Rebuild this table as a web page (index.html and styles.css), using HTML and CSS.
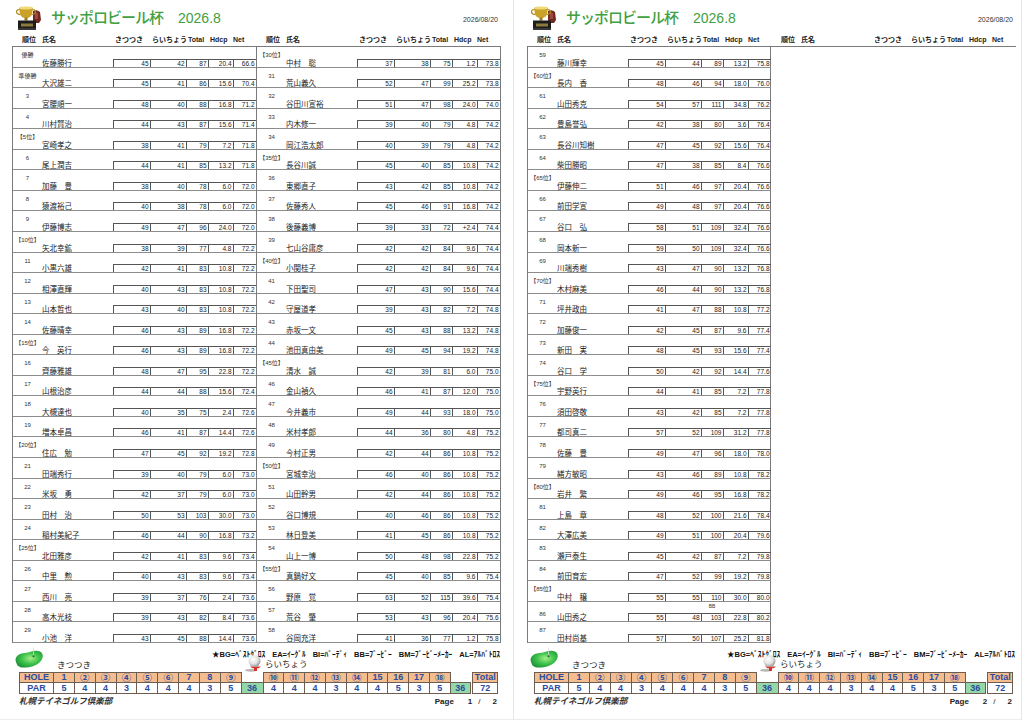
FILE: index.html
```html
<!DOCTYPE html>
<html lang="ja">
<head>
<meta charset="utf-8">
<title>サッポロビール杯 2026.8</title>
<link rel="stylesheet" href="styles.css">
</head>
<body>
<div class="sheet">

<!-- ================= PAGE 1 ================= -->
<section class="page page1">
  <header class="top">
    <svg class="logo" viewBox="0 0 28 26" aria-hidden="true">
      <path d="M19 6 Q23 4 26 7 L27 15 L25 18 L19 18 Z" fill="#6e2a20"/>
      <path d="M21 7 L24 8 L24 14 L21 14 Z" fill="#a0483a"/>
      <path d="M5 3 H19 L18 9 Q17 13 12 13 Q7 13 6 9 Z" fill="#c9a227"/>
      <ellipse cx="12" cy="3" rx="7" ry="1.6" fill="#f0d978"/>
      <path d="M5.5 4.5 Q2 4.5 2.6 7.5 Q3.4 9.5 6.5 9.5" fill="none" stroke="#b28a1c" stroke-width="1.2"/>
      <path d="M18.5 4.5 Q22 4.5 21.4 7.5 Q20.6 9.5 17.5 9.5" fill="none" stroke="#b28a1c" stroke-width="1.2"/>
      <rect x="10.5" y="12.5" width="3" height="3" fill="#9c7a16"/>
      <path d="M4 15.5 H22 V25 H4 Z" fill="#1c1c1c"/>
      <rect x="7" y="18.5" width="12" height="3" fill="#8c7a3c"/>
      <rect x="4" y="23.5" width="18" height="1" fill="#555"/>
    </svg>
    <h1 class="title"><span class="title-jp">サッポロビール杯</span><span class="title-yr">2026.8</span></h1>
    <span class="date">2026/08/20</span>
  </header>

  <div class="colheads">
    <div class="ch"><span class="ch-rank">順位</span><span class="ch-name">氏名</span><span>きつつき</span><span>らいちょう</span><span>Total</span><span>Hdcp</span><span class="ch-net">Net</span></div>
    <div class="ch"><span class="ch-rank">順位</span><span class="ch-name">氏名</span><span>きつつき</span><span>らいちょう</span><span>Total</span><span>Hdcp</span><span class="ch-net">Net</span></div>
  </div>

  <div class="table">
    <div class="col">
      <div class="row"><span class="rk">優勝</span><span class="nm">佐藤勝行</span><span class="c">45</span><span class="c">42</span><span class="c">87</span><span class="c">20.4</span><span class="c">66.6</span></div>
      <div class="row"><span class="rk">準優勝</span><span class="nm">大沢雄二</span><span class="c">45</span><span class="c">41</span><span class="c">86</span><span class="c">15.6</span><span class="c">70.4</span></div>
      <div class="row"><span class="rk">3</span><span class="nm">宮腰順一</span><span class="c">48</span><span class="c">40</span><span class="c">88</span><span class="c">16.8</span><span class="c">71.2</span></div>
      <div class="row"><span class="rk">4</span><span class="nm">川村賢治</span><span class="c">44</span><span class="c">43</span><span class="c">87</span><span class="c">15.6</span><span class="c">71.4</span></div>
      <div class="row"><span class="rk">【5位】</span><span class="nm">宮崎孝之</span><span class="c">38</span><span class="c">41</span><span class="c">79</span><span class="c">7.2</span><span class="c">71.8</span></div>
      <div class="row"><span class="rk">6</span><span class="nm">尾上潤吉</span><span class="c">44</span><span class="c">41</span><span class="c">85</span><span class="c">13.2</span><span class="c">71.8</span></div>
      <div class="row"><span class="rk">7</span><span class="nm">加藤　豊</span><span class="c">38</span><span class="c">40</span><span class="c">78</span><span class="c">6.0</span><span class="c">72.0</span></div>
      <div class="row"><span class="rk">8</span><span class="nm">猿渡裕己</span><span class="c">40</span><span class="c">38</span><span class="c">78</span><span class="c">6.0</span><span class="c">72.0</span></div>
      <div class="row"><span class="rk">9</span><span class="nm">伊藤博志</span><span class="c">49</span><span class="c">47</span><span class="c">96</span><span class="c">24.0</span><span class="c">72.0</span></div>
      <div class="row"><span class="rk">【10位】</span><span class="nm">矢北幸鉱</span><span class="c">38</span><span class="c">39</span><span class="c">77</span><span class="c">4.8</span><span class="c">72.2</span></div>
      <div class="row"><span class="rk">11</span><span class="nm">小黒六雄</span><span class="c">42</span><span class="c">41</span><span class="c">83</span><span class="c">10.8</span><span class="c">72.2</span></div>
      <div class="row"><span class="rk">12</span><span class="nm">相澤直輝</span><span class="c">40</span><span class="c">43</span><span class="c">83</span><span class="c">10.8</span><span class="c">72.2</span></div>
      <div class="row"><span class="rk">13</span><span class="nm">山本哲也</span><span class="c">43</span><span class="c">40</span><span class="c">83</span><span class="c">10.8</span><span class="c">72.2</span></div>
      <div class="row"><span class="rk">14</span><span class="nm">佐藤晴幸</span><span class="c">46</span><span class="c">43</span><span class="c">89</span><span class="c">16.8</span><span class="c">72.2</span></div>
      <div class="row"><span class="rk">【15位】</span><span class="nm">今　英行</span><span class="c">46</span><span class="c">43</span><span class="c">89</span><span class="c">16.8</span><span class="c">72.2</span></div>
      <div class="row"><span class="rk">16</span><span class="nm">齊藤雅雄</span><span class="c">48</span><span class="c">47</span><span class="c">95</span><span class="c">22.8</span><span class="c">72.2</span></div>
      <div class="row"><span class="rk">17</span><span class="nm">山根治彦</span><span class="c">44</span><span class="c">44</span><span class="c">88</span><span class="c">15.6</span><span class="c">72.4</span></div>
      <div class="row"><span class="rk">18</span><span class="nm">大槻達也</span><span class="c">40</span><span class="c">35</span><span class="c">75</span><span class="c">2.4</span><span class="c">72.6</span></div>
      <div class="row"><span class="rk">19</span><span class="nm">増本卓昌</span><span class="c">46</span><span class="c">41</span><span class="c">87</span><span class="c">14.4</span><span class="c">72.6</span></div>
      <div class="row"><span class="rk">【20位】</span><span class="nm">住広　勉</span><span class="c">47</span><span class="c">45</span><span class="c">92</span><span class="c">19.2</span><span class="c">72.8</span></div>
      <div class="row"><span class="rk">21</span><span class="nm">田端秀行</span><span class="c">39</span><span class="c">40</span><span class="c">79</span><span class="c">6.0</span><span class="c">73.0</span></div>
      <div class="row"><span class="rk">22</span><span class="nm">米坂　勇</span><span class="c">42</span><span class="c">37</span><span class="c">79</span><span class="c">6.0</span><span class="c">73.0</span></div>
      <div class="row"><span class="rk">23</span><span class="nm">田村　治</span><span class="c">50</span><span class="c">53</span><span class="c">103</span><span class="c">30.0</span><span class="c">73.0</span></div>
      <div class="row"><span class="rk">24</span><span class="nm">稲村美紀子</span><span class="c">46</span><span class="c">44</span><span class="c">90</span><span class="c">16.8</span><span class="c">73.2</span></div>
      <div class="row"><span class="rk">【25位】</span><span class="nm">北田雅彦</span><span class="c">42</span><span class="c">41</span><span class="c">83</span><span class="c">9.6</span><span class="c">73.4</span></div>
      <div class="row"><span class="rk">26</span><span class="nm">中里　勲</span><span class="c">40</span><span class="c">43</span><span class="c">83</span><span class="c">9.6</span><span class="c">73.4</span></div>
      <div class="row"><span class="rk">27</span><span class="nm">西川　亮</span><span class="c">39</span><span class="c">37</span><span class="c">76</span><span class="c">2.4</span><span class="c">73.6</span></div>
      <div class="row"><span class="rk">28</span><span class="nm">高木光枝</span><span class="c">39</span><span class="c">43</span><span class="c">82</span><span class="c">8.4</span><span class="c">73.6</span></div>
      <div class="row"><span class="rk">29</span><span class="nm">小池　洋</span><span class="c">43</span><span class="c">45</span><span class="c">88</span><span class="c">14.4</span><span class="c">73.6</span></div>
    </div>
    <div class="col col-last">
      <div class="row"><span class="rk">【30位】</span><span class="nm">中村　聡</span><span class="c">37</span><span class="c">38</span><span class="c">75</span><span class="c">1.2</span><span class="c">73.8</span></div>
      <div class="row"><span class="rk">31</span><span class="nm">荒山義久</span><span class="c">52</span><span class="c">47</span><span class="c">99</span><span class="c">25.2</span><span class="c">73.8</span></div>
      <div class="row"><span class="rk">32</span><span class="nm">谷田川宣裕</span><span class="c">51</span><span class="c">47</span><span class="c">98</span><span class="c">24.0</span><span class="c">74.0</span></div>
      <div class="row"><span class="rk">33</span><span class="nm">内木修一</span><span class="c">39</span><span class="c">40</span><span class="c">79</span><span class="c">4.8</span><span class="c">74.2</span></div>
      <div class="row"><span class="rk">34</span><span class="nm">岡江浩太郎</span><span class="c">40</span><span class="c">39</span><span class="c">79</span><span class="c">4.8</span><span class="c">74.2</span></div>
      <div class="row"><span class="rk">【35位】</span><span class="nm">長谷川誠</span><span class="c">45</span><span class="c">40</span><span class="c">85</span><span class="c">10.8</span><span class="c">74.2</span></div>
      <div class="row"><span class="rk">36</span><span class="nm">東郷直子</span><span class="c">43</span><span class="c">42</span><span class="c">85</span><span class="c">10.8</span><span class="c">74.2</span></div>
      <div class="row"><span class="rk">37</span><span class="nm">佐藤秀人</span><span class="c">45</span><span class="c">46</span><span class="c">91</span><span class="c">16.8</span><span class="c">74.2</span></div>
      <div class="row"><span class="rk">38</span><span class="nm">後藤義博</span><span class="c">39</span><span class="c">33</span><span class="c">72</span><span class="c">+2.4</span><span class="c">74.4</span></div>
      <div class="row"><span class="rk">39</span><span class="nm">七山谷庸彦</span><span class="c">42</span><span class="c">42</span><span class="c">84</span><span class="c">9.6</span><span class="c">74.4</span></div>
      <div class="row"><span class="rk">【40位】</span><span class="nm">小関桂子</span><span class="c">42</span><span class="c">42</span><span class="c">84</span><span class="c">9.6</span><span class="c">74.4</span></div>
      <div class="row"><span class="rk">41</span><span class="nm">下田聖司</span><span class="c">47</span><span class="c">43</span><span class="c">90</span><span class="c">15.6</span><span class="c">74.4</span></div>
      <div class="row"><span class="rk">42</span><span class="nm">守屋道孝</span><span class="c">39</span><span class="c">43</span><span class="c">82</span><span class="c">7.2</span><span class="c">74.8</span></div>
      <div class="row"><span class="rk">43</span><span class="nm">赤坂一文</span><span class="c">45</span><span class="c">43</span><span class="c">88</span><span class="c">13.2</span><span class="c">74.8</span></div>
      <div class="row"><span class="rk">44</span><span class="nm">池田真由美</span><span class="c">49</span><span class="c">45</span><span class="c">94</span><span class="c">19.2</span><span class="c">74.8</span></div>
      <div class="row"><span class="rk">【45位】</span><span class="nm">清水　誠</span><span class="c">42</span><span class="c">39</span><span class="c">81</span><span class="c">6.0</span><span class="c">75.0</span></div>
      <div class="row"><span class="rk">46</span><span class="nm">金山禎久</span><span class="c">46</span><span class="c">41</span><span class="c">87</span><span class="c">12.0</span><span class="c">75.0</span></div>
      <div class="row"><span class="rk">47</span><span class="nm">今井義市</span><span class="c">49</span><span class="c">44</span><span class="c">93</span><span class="c">18.0</span><span class="c">75.0</span></div>
      <div class="row"><span class="rk">48</span><span class="nm">米村孝郎</span><span class="c">44</span><span class="c">36</span><span class="c">80</span><span class="c">4.8</span><span class="c">75.2</span></div>
      <div class="row"><span class="rk">49</span><span class="nm">今村正男</span><span class="c">42</span><span class="c">44</span><span class="c">86</span><span class="c">10.8</span><span class="c">75.2</span></div>
      <div class="row"><span class="rk">【50位】</span><span class="nm">宮城幸治</span><span class="c">46</span><span class="c">40</span><span class="c">86</span><span class="c">10.8</span><span class="c">75.2</span></div>
      <div class="row"><span class="rk">51</span><span class="nm">山田幹男</span><span class="c">42</span><span class="c">44</span><span class="c">86</span><span class="c">10.8</span><span class="c">75.2</span></div>
      <div class="row"><span class="rk">52</span><span class="nm">谷口博規</span><span class="c">40</span><span class="c">46</span><span class="c">86</span><span class="c">10.8</span><span class="c">75.2</span></div>
      <div class="row"><span class="rk">53</span><span class="nm">林日登美</span><span class="c">41</span><span class="c">45</span><span class="c">86</span><span class="c">10.8</span><span class="c">75.2</span></div>
      <div class="row"><span class="rk">54</span><span class="nm">山上一博</span><span class="c">50</span><span class="c">48</span><span class="c">98</span><span class="c">22.8</span><span class="c">75.2</span></div>
      <div class="row"><span class="rk">【55位】</span><span class="nm">真鍋好文</span><span class="c">45</span><span class="c">40</span><span class="c">85</span><span class="c">9.6</span><span class="c">75.4</span></div>
      <div class="row"><span class="rk">56</span><span class="nm">野原　覚</span><span class="c">63</span><span class="c">52</span><span class="c">115</span><span class="c">39.6</span><span class="c">75.4</span></div>
      <div class="row"><span class="rk">57</span><span class="nm">荒谷　肇</span><span class="c">53</span><span class="c">43</span><span class="c">96</span><span class="c">20.4</span><span class="c">75.6</span></div>
      <div class="row"><span class="rk">58</span><span class="nm">谷岡充洋</span><span class="c">41</span><span class="c">36</span><span class="c">77</span><span class="c">1.2</span><span class="c">75.8</span></div>
    </div>
  </div>

  <footer class="foot">
    <div class="legend">
      <svg class="course" viewBox="0 0 30 22" aria-hidden="true">
        <defs>
          <radialGradient id="grn1" cx="55%" cy="45%" r="60%">
            <stop offset="0" stop-color="#a6ec86"/>
            <stop offset="0.55" stop-color="#3dc24c"/>
            <stop offset="1" stop-color="#1e9436"/>
          </radialGradient>
        </defs>
        <path d="M2 15 C0 10 5 6 11 6 C16 6 19 3 24 4 C30 5 30 11 26 15 C22 19 15 21 8 20.5 C4 20 3 18 2 15 Z" fill="url(#grn1)"/>
        <line x1="19.5" y1="0.5" x2="19.5" y2="9" stroke="#d8d8d8" stroke-width="0.8"/>
        <circle cx="19.5" cy="9.2" r="1" fill="#176d29"/>
      </svg>
      <p class="legend-text"><span>★BG=ﾍﾞｽﾄｸﾞﾛｽ</span><span>EA=ｲｰｸﾞﾙ</span><span>BI=ﾊﾞｰﾃﾞｨ</span><span>BB=ﾌﾞｰﾋﾞｰ</span><span>BM=ﾌﾞｰﾋﾞｰﾒｰｶｰ</span><span>AL=ｱﾙﾊﾞﾄﾛｽ</span></p>
      <span class="course-name">きつつき</span>
      <svg class="ball" viewBox="0 0 18 18" aria-hidden="true">
        <defs>
          <radialGradient id="bl1" cx="40%" cy="35%" r="65%">
            <stop offset="0" stop-color="#ffffff"/>
            <stop offset="0.6" stop-color="#e2e2e2"/>
            <stop offset="1" stop-color="#9a9a9a"/>
          </radialGradient>
        </defs>
        <ellipse cx="6" cy="16.3" rx="6" ry="1.4" fill="#7a7a7a" opacity="0.55"/>
        <path d="M5 12.5 H16 L13.5 14.2 H12 V17 H9 V14.2 H7.5 Z" fill="#d7312c"/>
        <circle cx="9.5" cy="7" r="6" fill="url(#bl1)"/>
      </svg>
      <span class="course-name2">らいちょう</span>
    </div>

    <table class="holes">
      <colgroup><col class="w-lab"><col class="w-h" span="9"><col class="w-sub"><col class="w-h2" span="9"><col class="w-sub2"><col class="w-gap"><col class="w-tot"></colgroup>
      <tr class="hole"><th>HOLE</th><td>1</td><td class="cir">②</td><td class="cir">③</td><td class="cir">④</td><td class="cir">⑤</td><td class="cir">⑥</td><td>7</td><td>8</td><td class="cir">⑨</td><td class="blank"></td><td class="cir">⑩</td><td class="cir">⑪</td><td class="cir">⑫</td><td class="cir">⑬</td><td class="cir">⑭</td><td>15</td><td>16</td><td>17</td><td class="cir">⑱</td><td class="blank"></td><td class="blank"></td><td class="tot">Total</td></tr>
      <tr class="par"><th>PAR</th><td>5</td><td>4</td><td>4</td><td>3</td><td>4</td><td>4</td><td>4</td><td>3</td><td>5</td><td class="sub">36</td><td>4</td><td>4</td><td>4</td><td>3</td><td>4</td><td>4</td><td>5</td><td>3</td><td>5</td><td class="sub">36</td><td class="blank"></td><td>72</td></tr>
    </table>

    <div class="bottom">
      <span class="club">札幌テイネゴルフ倶楽部</span>
      <span class="pg">Page</span><span class="pn">1</span><span class="sl">/</span><span class="pn2">2</span>
    </div>
  </footer>
</section>

<!-- ================= PAGE 2 ================= -->
<section class="page page2">
  <header class="top">
    <svg class="logo" viewBox="0 0 28 26" aria-hidden="true">
      <path d="M19 6 Q23 4 26 7 L27 15 L25 18 L19 18 Z" fill="#6e2a20"/>
      <path d="M21 7 L24 8 L24 14 L21 14 Z" fill="#a0483a"/>
      <path d="M5 3 H19 L18 9 Q17 13 12 13 Q7 13 6 9 Z" fill="#c9a227"/>
      <ellipse cx="12" cy="3" rx="7" ry="1.6" fill="#f0d978"/>
      <path d="M5.5 4.5 Q2 4.5 2.6 7.5 Q3.4 9.5 6.5 9.5" fill="none" stroke="#b28a1c" stroke-width="1.2"/>
      <path d="M18.5 4.5 Q22 4.5 21.4 7.5 Q20.6 9.5 17.5 9.5" fill="none" stroke="#b28a1c" stroke-width="1.2"/>
      <rect x="10.5" y="12.5" width="3" height="3" fill="#9c7a16"/>
      <path d="M4 15.5 H22 V25 H4 Z" fill="#1c1c1c"/>
      <rect x="7" y="18.5" width="12" height="3" fill="#8c7a3c"/>
      <rect x="4" y="23.5" width="18" height="1" fill="#555"/>
    </svg>
    <h1 class="title"><span class="title-jp">サッポロビール杯</span><span class="title-yr">2026.8</span></h1>
    <span class="date">2026/08/20</span>
  </header>

  <div class="colheads">
    <div class="ch"><span class="ch-rank">順位</span><span class="ch-name">氏名</span><span>きつつき</span><span>らいちょう</span><span>Total</span><span>Hdcp</span><span class="ch-net">Net</span></div>
    <div class="ch"><span class="ch-rank">順位</span><span class="ch-name">氏名</span><span>きつつき</span><span>らいちょう</span><span>Total</span><span>Hdcp</span><span class="ch-net">Net</span></div>
  </div>

  <div class="table">
    <div class="col col-last">
      <div class="row"><span class="rk">59</span><span class="nm">藤川輝幸</span><span class="c">45</span><span class="c">44</span><span class="c">89</span><span class="c">13.2</span><span class="c">75.8</span></div>
      <div class="row"><span class="rk">【60位】</span><span class="nm">長内　香</span><span class="c">48</span><span class="c">46</span><span class="c">94</span><span class="c">18.0</span><span class="c">76.0</span></div>
      <div class="row"><span class="rk">61</span><span class="nm">山田秀克</span><span class="c">54</span><span class="c">57</span><span class="c">111</span><span class="c">34.8</span><span class="c">76.2</span></div>
      <div class="row"><span class="rk">62</span><span class="nm">豊島誉弘</span><span class="c">42</span><span class="c">38</span><span class="c">80</span><span class="c">3.6</span><span class="c">76.4</span></div>
      <div class="row"><span class="rk">63</span><span class="nm">長谷川知樹</span><span class="c">47</span><span class="c">45</span><span class="c">92</span><span class="c">15.6</span><span class="c">76.4</span></div>
      <div class="row"><span class="rk">64</span><span class="nm">柴田勝昭</span><span class="c">47</span><span class="c">38</span><span class="c">85</span><span class="c">8.4</span><span class="c">76.6</span></div>
      <div class="row"><span class="rk">【65位】</span><span class="nm">伊藤伸二</span><span class="c">51</span><span class="c">46</span><span class="c">97</span><span class="c">20.4</span><span class="c">76.6</span></div>
      <div class="row"><span class="rk">66</span><span class="nm">前田学宣</span><span class="c">49</span><span class="c">48</span><span class="c">97</span><span class="c">20.4</span><span class="c">76.6</span></div>
      <div class="row"><span class="rk">67</span><span class="nm">谷口　弘</span><span class="c">58</span><span class="c">51</span><span class="c">109</span><span class="c">32.4</span><span class="c">76.6</span></div>
      <div class="row"><span class="rk">68</span><span class="nm">岡本新一</span><span class="c">59</span><span class="c">50</span><span class="c">109</span><span class="c">32.4</span><span class="c">76.6</span></div>
      <div class="row"><span class="rk">69</span><span class="nm">川端秀樹</span><span class="c">43</span><span class="c">47</span><span class="c">90</span><span class="c">13.2</span><span class="c">76.8</span></div>
      <div class="row"><span class="rk">【70位】</span><span class="nm">木村麻美</span><span class="c">46</span><span class="c">44</span><span class="c">90</span><span class="c">13.2</span><span class="c">76.8</span></div>
      <div class="row"><span class="rk">71</span><span class="nm">坪井政由</span><span class="c">41</span><span class="c">47</span><span class="c">88</span><span class="c">10.8</span><span class="c">77.2</span></div>
      <div class="row"><span class="rk">72</span><span class="nm">加藤俊一</span><span class="c">42</span><span class="c">45</span><span class="c">87</span><span class="c">9.6</span><span class="c">77.4</span></div>
      <div class="row"><span class="rk">73</span><span class="nm">新田　実</span><span class="c">48</span><span class="c">45</span><span class="c">93</span><span class="c">15.6</span><span class="c">77.4</span></div>
      <div class="row"><span class="rk">74</span><span class="nm">谷口　学</span><span class="c">50</span><span class="c">42</span><span class="c">92</span><span class="c">14.4</span><span class="c">77.6</span></div>
      <div class="row"><span class="rk">【75位】</span><span class="nm">宇野英行</span><span class="c">44</span><span class="c">41</span><span class="c">85</span><span class="c">7.2</span><span class="c">77.8</span></div>
      <div class="row"><span class="rk">76</span><span class="nm">須田啓敬</span><span class="c">43</span><span class="c">42</span><span class="c">85</span><span class="c">7.2</span><span class="c">77.8</span></div>
      <div class="row"><span class="rk">77</span><span class="nm">都司真二</span><span class="c">57</span><span class="c">52</span><span class="c">109</span><span class="c">31.2</span><span class="c">77.8</span></div>
      <div class="row"><span class="rk">78</span><span class="nm">佐藤　豊</span><span class="c">49</span><span class="c">47</span><span class="c">96</span><span class="c">18.0</span><span class="c">78.0</span></div>
      <div class="row"><span class="rk">79</span><span class="nm">緒方敏昭</span><span class="c">43</span><span class="c">46</span><span class="c">89</span><span class="c">10.8</span><span class="c">78.2</span></div>
      <div class="row"><span class="rk">【80位】</span><span class="nm">岩井　繁</span><span class="c">49</span><span class="c">46</span><span class="c">95</span><span class="c">16.8</span><span class="c">78.2</span></div>
      <div class="row"><span class="rk">81</span><span class="nm">上島　章</span><span class="c">48</span><span class="c">52</span><span class="c">100</span><span class="c">21.6</span><span class="c">78.4</span></div>
      <div class="row"><span class="rk">82</span><span class="nm">大澤広美</span><span class="c">49</span><span class="c">51</span><span class="c">100</span><span class="c">20.4</span><span class="c">79.6</span></div>
      <div class="row"><span class="rk">83</span><span class="nm">瀬戸泰生</span><span class="c">45</span><span class="c">42</span><span class="c">87</span><span class="c">7.2</span><span class="c">79.8</span></div>
      <div class="row"><span class="rk">84</span><span class="nm">前田育宏</span><span class="c">47</span><span class="c">52</span><span class="c">99</span><span class="c">19.2</span><span class="c">79.8</span></div>
      <div class="row"><span class="rk">【85位】</span><span class="nm">中村　穣</span><span class="c">55</span><span class="c">55</span><span class="c">110</span><span class="c">30.0</span><span class="c">80.0</span></div>
      <div class="row"><span class="rk rk-low">86</span><span class="nm">山田秀之</span><span class="note">BB</span><span class="c">55</span><span class="c">48</span><span class="c">103</span><span class="c">22.8</span><span class="c">80.2</span></div>
      <div class="row"><span class="rk">87</span><span class="nm">田村尚基</span><span class="c">57</span><span class="c">50</span><span class="c">107</span><span class="c">25.2</span><span class="c">81.8</span></div>
    </div>
    <div class="col col-empty"></div>
  </div>

  <footer class="foot">
    <div class="legend">
      <svg class="course" viewBox="0 0 30 22" aria-hidden="true">
        <defs>
          <radialGradient id="grn2" cx="55%" cy="45%" r="60%">
            <stop offset="0" stop-color="#a6ec86"/>
            <stop offset="0.55" stop-color="#3dc24c"/>
            <stop offset="1" stop-color="#1e9436"/>
          </radialGradient>
        </defs>
        <path d="M2 15 C0 10 5 6 11 6 C16 6 19 3 24 4 C30 5 30 11 26 15 C22 19 15 21 8 20.5 C4 20 3 18 2 15 Z" fill="url(#grn2)"/>
        <line x1="19.5" y1="0.5" x2="19.5" y2="9" stroke="#d8d8d8" stroke-width="0.8"/>
        <circle cx="19.5" cy="9.2" r="1" fill="#176d29"/>
      </svg>
      <p class="legend-text"><span>★BG=ﾍﾞｽﾄｸﾞﾛｽ</span><span>EA=ｲｰｸﾞﾙ</span><span>BI=ﾊﾞｰﾃﾞｨ</span><span>BB=ﾌﾞｰﾋﾞｰ</span><span>BM=ﾌﾞｰﾋﾞｰﾒｰｶｰ</span><span>AL=ｱﾙﾊﾞﾄﾛｽ</span></p>
      <span class="course-name">きつつき</span>
      <svg class="ball" viewBox="0 0 18 18" aria-hidden="true">
        <defs>
          <radialGradient id="bl2" cx="40%" cy="35%" r="65%">
            <stop offset="0" stop-color="#ffffff"/>
            <stop offset="0.6" stop-color="#e2e2e2"/>
            <stop offset="1" stop-color="#9a9a9a"/>
          </radialGradient>
        </defs>
        <ellipse cx="6" cy="16.3" rx="6" ry="1.4" fill="#7a7a7a" opacity="0.55"/>
        <path d="M5 12.5 H16 L13.5 14.2 H12 V17 H9 V14.2 H7.5 Z" fill="#d7312c"/>
        <circle cx="9.5" cy="7" r="6" fill="url(#bl2)"/>
      </svg>
      <span class="course-name2">らいちょう</span>
    </div>

    <table class="holes">
      <colgroup><col class="w-lab"><col class="w-h" span="9"><col class="w-sub"><col class="w-h2" span="9"><col class="w-sub2"><col class="w-gap"><col class="w-tot"></colgroup>
      <tr class="hole"><th>HOLE</th><td>1</td><td class="cir">②</td><td class="cir">③</td><td class="cir">④</td><td class="cir">⑤</td><td class="cir">⑥</td><td>7</td><td>8</td><td class="cir">⑨</td><td class="blank"></td><td class="cir">⑩</td><td class="cir">⑪</td><td class="cir">⑫</td><td class="cir">⑬</td><td class="cir">⑭</td><td>15</td><td>16</td><td>17</td><td class="cir">⑱</td><td class="blank"></td><td class="blank"></td><td class="tot">Total</td></tr>
      <tr class="par"><th>PAR</th><td>5</td><td>4</td><td>4</td><td>3</td><td>4</td><td>4</td><td>4</td><td>3</td><td>5</td><td class="sub">36</td><td>4</td><td>4</td><td>4</td><td>3</td><td>4</td><td>4</td><td>5</td><td>3</td><td>5</td><td class="sub">36</td><td class="blank"></td><td>72</td></tr>
    </table>

    <div class="bottom">
      <span class="club">札幌テイネゴルフ倶楽部</span>
      <span class="pg">Page</span><span class="pn">2</span><span class="sl">/</span><span class="pn2">2</span>
    </div>
  </footer>
</section>

</div>
</body>
</html>
```

FILE: styles.css
```css
* { box-sizing: border-box; margin: 0; padding: 0; }

html, body {
  width: 1024px;
  height: 724px;
  overflow: hidden;
  background: #ffffff;
}

body {
  font-family: "Liberation Sans", "Noto Sans CJK JP", sans-serif;
  color: #222;
}

.sheet { display: flex; }

/* ---------- page ---------- */
.page {
  width: 514px;
  height: 720px;
  padding: 0 12px 0 12px;
  border-right: 1px solid #e6e6e6;
  border-bottom: 1px solid #ececec;
  display: flex;
  flex-direction: column;
}
.page2 {
  width: 508px;
  padding: 0 5px 0 13px;
}

/* ---------- header ---------- */
.top {
  height: 34px;
  display: flex;
  align-items: center;
}
.logo {
  width: 28px;
  height: 26px;
  margin-left: 2px;
  margin-top: 2px;
  flex: none;
}
.title {
  margin-left: 9px;
  color: #41a041;
  font-weight: 500;
  line-height: 1;
  white-space: nowrap;
  display: flex;
  align-items: baseline;
}
.title-jp {
  font-family: "Noto Sans CJK JP", sans-serif;
  font-size: 15px;
  letter-spacing: -1px;
}
.title-yr {
  font-family: "Liberation Sans", sans-serif;
  font-size: 14px;
  margin-left: 15px;
}
.date {
  margin-left: auto;
  margin-right: 3px;
  margin-top: 5px;
  font-size: 7px;
  color: #333;
}

/* ---------- column headings ---------- */
.colheads {
  display: grid;
  grid-template-columns: 244px 245px;
  height: 12px;
}
.ch {
  display: grid;
  grid-template-columns: 29px 71px 37px 36px 22px 25px 23px;
  padding-left: 1px;
  font-size: 7px;
  font-weight: bold;
  line-height: 12px;
  white-space: nowrap;
  color: #222;
}
.ch span { padding-left: 2px; }
.ch .ch-rank { padding-left: 9px; }
.ch .ch-name { padding-left: 0; }
.ch .ch-net { padding-left: 0; }

/* ---------- score table ---------- */
.table {
  display: grid;
  grid-template-columns: 244px 245px;
  height: 597px;
  border-top: 1px solid #7a7a7a;
}
.col {
  display: grid;
  grid-template-rows: repeat(29, 1fr);
  border-left: 1px solid #7a7a7a;
}
.col-last { border-right: 1px solid #7a7a7a; }
.col-empty { border: none; }

.row {
  display: grid;
  grid-template-columns: 29px 71px 37px 36px 22px 25px 23px;
  grid-template-rows: 1fr 8px;
  border-bottom: 1px solid #8c8c8c;
  min-height: 0;
}
.rk {
  grid-column: 1;
  grid-row: 1 / 3;
  font-size: 6px;
  line-height: 6px;
  padding-top: 5px;
  text-align: center;
  white-space: nowrap;
  color: #333;
}
.rk-low { padding-top: 9px; }
.nm {
  grid-column: 2;
  grid-row: 1 / 3;
  align-self: end;
  font-family: "Noto Sans CJK JP", sans-serif;
  font-size: 7.5px;
  line-height: 9px;
  white-space: nowrap;
  color: #222;
}
.c {
  grid-row: 2;
  border-top: 1px solid #555;
  border-left: 1px solid #555;
  font-size: 6.5px;
  line-height: 7px;
  text-align: right;
  padding-right: 1.5px;
  color: #222;
}
.note {
  grid-column: 5;
  grid-row: 1;
  align-self: start;
  padding-top: 2px;
  font-size: 5px;
  line-height: 5px;
  text-align: center;
  color: #333;
}

/* ---------- footer ---------- */
.foot {
  display: flex;
  flex-direction: column;
}
.legend {
  display: grid;
  grid-template-columns: 30px 13px 188px 20px 1fr;
  grid-template-rows: 17px 12px;
  margin-left: 2px;
}
.course {
  grid-column: 1;
  grid-row: 1 / 3;
  width: 30px;
  height: 22px;
  margin-top: 4px;
}
.legend-text {
  grid-column: 2 / 6;
  grid-row: 1;
  justify-self: end;
  align-self: end;
  margin-right: 1px;
  margin-bottom: 1px;
  display: flex;
  gap: 7px;
  font-size: 7.5px;
  font-weight: bold;
  line-height: 8px;
  white-space: nowrap;
  color: #111;
}
.course-name, .course-name2 {
  grid-row: 2;
  font-family: "Noto Sans CJK JP", sans-serif;
  font-size: 8.5px;
  line-height: 10px;
  align-self: start;
  white-space: nowrap;
  color: #222;
}
.course-name { grid-column: 3; margin-top: -1px; }
.course-name2 { grid-column: 5; margin-top: -2px; }
.ball {
  grid-column: 4;
  grid-row: 1 / 3;
  align-self: end;
  width: 18px;
  height: 18px;
}

.holes {
  margin-left: 7px;
  border-collapse: collapse;
  table-layout: fixed;
  width: 478px;
}
.w-lab { width: 34px; }
.w-h { width: 20.85px; }
.w-sub { width: 22px; }
.w-h2 { width: 20.8px; }
.w-sub2 { width: 20px; }
.w-gap { width: 2.7px; }
.w-tot { width: 24.6px; }

.holes th, .holes td {
  border: 1px solid #6e5e52;
  height: 10.3px;
  padding: 0;
  font-size: 9px;
  line-height: 8.5px;
  text-align: center;
  font-weight: bold;
  color: #2a4c9e;
  white-space: nowrap;
}
.holes td.cir {
  font-family: "Noto Sans CJK JP", sans-serif;
  font-size: 9.5px;
  line-height: 8.5px;
  font-weight: bold;
}
.holes .hole th, .holes .hole td { background: #f4bd8f; }
.holes .par th, .holes .par td { background: #ffffff; }
.holes td.blank { border: none; background: transparent; }
.holes td.sub { background: #93d8a6; }

.bottom {
  display: flex;
  align-items: center;
  height: 13px;
  margin-top: 0;
  font-weight: bold;
  white-space: nowrap;
}
.club {
  margin-left: 7px;
  font-family: "Noto Sans CJK JP", sans-serif;
  font-size: 8.5px;
  font-style: italic;
  color: #333;
}
.pg { margin-left: auto; font-size: 8px; color: #222; margin-top: 2px; }
.pn { margin-left: 14px; font-size: 8px; margin-top: 2px; }
.sl { margin-left: 6px; font-size: 8px; font-weight: normal; margin-top: 2px; }
.pn2 { margin-left: 12px; margin-right: 4px; font-size: 8px; margin-top: 2px; }
```
